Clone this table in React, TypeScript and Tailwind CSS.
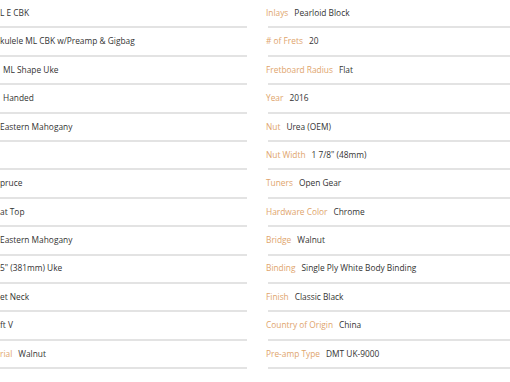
import React from "react";

const leftRows: { label?: string; value: string; pad: string }[] = [
  { value: "L E CBK", pad: "pl-0" },
  { value: "kulele ML CBK w/Preamp & Gigbag", pad: "pl-0" },
  { value: "ML Shape Uke", pad: "pl-[3px]" },
  { value: "Handed", pad: "pl-[3px]" },
  { value: "Eastern Mahogany", pad: "pl-0" },
  { value: "", pad: "pl-0" },
  { value: "pruce", pad: "pl-0" },
  { value: "at Top", pad: "pl-0" },
  { value: "Eastern Mahogany", pad: "pl-0" },
  { value: "5\" (381mm) Uke", pad: "pl-0" },
  { value: "et Neck", pad: "pl-0" },
  { value: "ft V", pad: "pl-0" },
  { label: "rial", value: "Walnut", pad: "pl-0" },
];

const rightRows: { label: string; value: string }[] = [
  { label: "Inlays", value: "Pearloid Block" },
  { label: "# of Frets", value: "20" },
  { label: "Fretboard Radius", value: "Flat" },
  { label: "Year", value: "2016" },
  { label: "Nut", value: "Urea (OEM)" },
  { label: "Nut Width", value: "1 7/8\" (48mm)" },
  { label: "Tuners", value: "Open Gear" },
  { label: "Hardware Color", value: "Chrome" },
  { label: "Bridge", value: "Walnut" },
  { label: "Binding", value: "Single Ply White Body Binding" },
  { label: "Finish", value: "Classic Black" },
  { label: "Country of Origin", value: "China" },
  { label: "Pre-amp Type", value: "DMT UK-9000" },
];

export default function App() {
  return (
    <div
      className="w-[510px] h-[382px] overflow-hidden bg-white flex gap-[19px] text-[8.35px] text-[#333333]"
      style={{ fontFamily: '"Open Sans", "Noto Sans", sans-serif' }}
    >
      <div className="w-[247px] shrink-0 flex flex-col">
        {leftRows.map((r, i) => (
          <div key={i} className="flex flex-col">
            <div className={`h-[26.4px] flex items-center gap-[6px] whitespace-nowrap ${r.pad}`}>
              {r.label && <span className="text-[#e0a46c]">{r.label}</span>}
              <span>{r.value}</span>
            </div>
            <div className="h-[2px] bg-[#e3e3e3]" />
          </div>
        ))}
      </div>
      <div className="w-[244px] shrink-0 flex flex-col">
        {rightRows.map((r, i) => (
          <div key={i} className="flex flex-col">
            <div className="h-[26.4px] flex items-center gap-[6px] whitespace-nowrap">
              <span className="text-[#e0a46c]">{r.label}</span>
              <span>{r.value}</span>
            </div>
            <div className="h-[2px] ml-[2px] bg-[#e3e3e3]" />
          </div>
        ))}
      </div>
    </div>
  );
}
